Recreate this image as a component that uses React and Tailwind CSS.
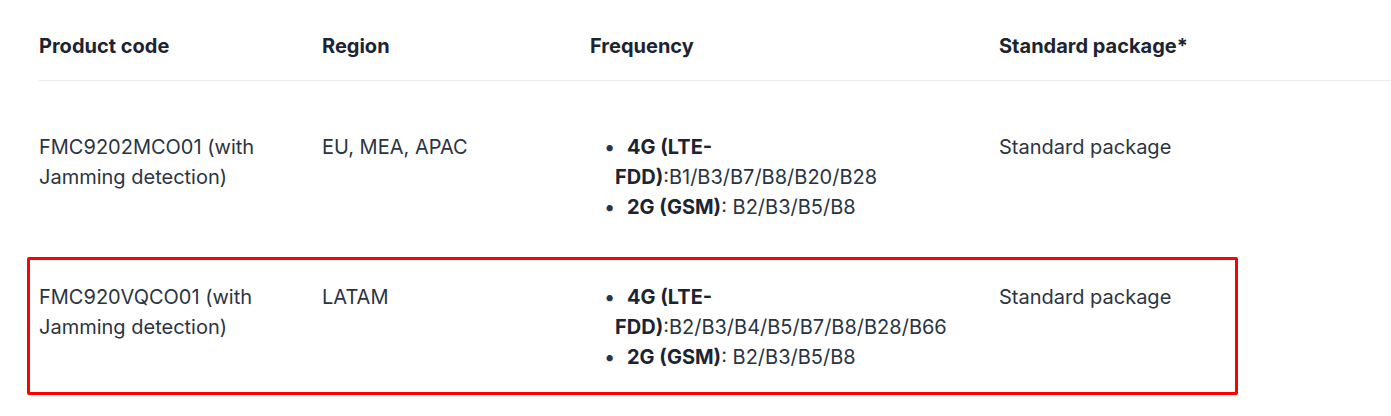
const ROWS = [
  {
    code: 'FMC9202MCO01 (with Jamming detection)',
    region: 'EU, MEA, APAC',
    lte: 'B1/B3/B7/B8/B20/B28',
    gsm: 'B2/B3/B5/B8',
    pkg: 'Standard package',
  },
  {
    code: 'FMC920VQCO01 (with Jamming detection)',
    region: 'LATAM',
    lte: 'B2/B3/B4/B5/B7/B8/B28/B66',
    gsm: 'B2/B3/B5/B8',
    pkg: 'Standard package',
    marked: true,
  },
]

function Bullet({ children }) {
  return (
    <li className="pl-[25px]">
      <span className="inline-block w-[24px] -ml-[12px] pl-[1px]">•</span>
      {children}
    </li>
  )
}

function Row({ row }) {
  return (
    <div className="relative grid grid-cols-[283px_268px_409px_1fr] py-[30px]">
      {row.marked && (
        <div className="pointer-events-none absolute left-[-12px] top-[5px] w-[1211px] h-[138px] border-[3px] border-[#ff0000] rounded-[2px]" />
      )}
      <div className="pr-[24px]">{row.code}</div>
      <div className="pr-[24px]">{row.region}</div>
      <ul className="pr-[40px]">
        <Bullet>
          <b className="font-bold text-[#1c2433]">4G (LTE-FDD)</b>:{row.lte}
        </Bullet>
        <Bullet>
          <b className="font-bold text-[#1c2433]">2G (GSM)</b>: {row.gsm}
        </Bullet>
      </ul>
      <div>{row.pkg}</div>
    </div>
  )
}

export default function App() {
  return (
    <div className="w-[1391px] h-[416px] overflow-hidden bg-white pl-[39px] font-['Inter',sans-serif] text-[20px] leading-[30px] text-[#2b3443]">
      <div className="grid grid-cols-[283px_268px_409px_1fr] pt-[31px] pb-[19px] border-b border-[#ebedf0] font-bold text-[#1c2433]">
        <div>Product code</div>
        <div>Region</div>
        <div>Frequency</div>
        <div>Standard package*</div>
      </div>
      <div className="pt-[21px]">
        {ROWS.map((r) => (
          <Row key={r.code} row={r} />
        ))}
      </div>
    </div>
  )
}
